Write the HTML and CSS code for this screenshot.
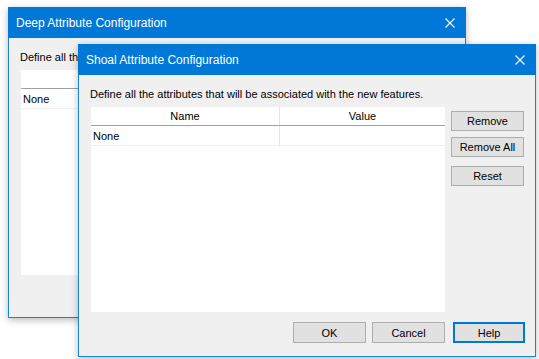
FILE: index.html
```html
<!DOCTYPE html>
<html>
<head>
    <link rel="stylesheet" href="styles.css">
</head>
<body>
    <div class="desktop">
        <!-- back window: only its left strip shows from under the front one -->
        <div class="window window-deep">
            <div class="titlebar">
                <span class="title">Deep Attribute Configuration</span>
                <svg class="close-icon" width="10" height="10" viewBox="0 0 10 10"><path d="M0.5 0.5L9.5 9.5M9.5 0.5L0.5 9.5" stroke="#fff" stroke-width="1.1" fill="none"/></svg>
            </div>
            <div class="window-body">
                <div class="description description-clipped">Define all the attributes that will be associated with the new features.</div>
                <div class="main-row">
                    <div class="list-view">
                        <div class="list-head">
                            <div class="cell"></div>
                            <div class="cell"></div>
                        </div>
                        <div class="list-row">
                            <div class="cell">None</div>
                            <div class="cell"></div>
                        </div>
                    </div>
                </div>
            </div>
        </div>

        <div class="window window-shoal">
            <div class="titlebar">
                <span class="title">Shoal Attribute Configuration</span>
                <svg class="close-icon" width="10" height="10" viewBox="0 0 10 10"><path d="M0.5 0.5L9.5 9.5M9.5 0.5L0.5 9.5" stroke="#fff" stroke-width="1.1" fill="none"/></svg>
            </div>
            <div class="window-body">
                <div class="description">Define all the attributes that will be associated with the new features.</div>
                <div class="main-row">
                    <div class="list-view">
                        <div class="list-head">
                            <div class="cell">Name</div>
                            <div class="cell">Value</div>
                        </div>
                        <div class="list-row">
                            <div class="cell">None</div>
                            <div class="cell"></div>
                        </div>
                    </div>
                    <div class="side-buttons">
                        <button class="btn">Remove</button>
                        <button class="btn">Remove All</button>
                        <button class="btn btn-reset">Reset</button>
                    </div>
                </div>
                <div class="footer">
                    <button class="btn">OK</button>
                    <button class="btn">Cancel</button>
                    <button class="btn btn-default">Help</button>
                </div>
            </div>
        </div>
    </div>
</body>
</html>
```

FILE: styles.css
```css
body {
    margin: 0;
    padding: 0;
    background: #ffffff;
    font-family: "Liberation Sans", Arial, sans-serif;
    font-size: 11px;
    color: #000;
}

.desktop {
    position: relative;
    width: 539px;
    height: 359px;
    overflow: hidden;
}

/* windows sit on a free desktop */
.window {
    position: absolute;
    width: 458px;
    box-sizing: border-box;
    background: #f0f0f0;
    border: 1px solid #1883d7;
    border-top: none;
    box-shadow: 0 2px 7px rgba(0, 0, 0, 0.28);
    display: flex;
    flex-direction: column;
}

.window-deep {
    left: 8px;
    top: 7px;
    height: 311px;
}

.window-shoal {
    left: 78px;
    top: 44px;
    height: 313px;
}

.titlebar {
    height: 31px;
    flex-shrink: 0;
    margin: 0 -1px;
    background: #0078d7;
    color: #fff;
    display: flex;
    align-items: center;
    justify-content: space-between;
    padding: 0 11px 0 8px;
}

.title {
    font-size: 12px;
}

.close-icon {
    display: block;
}

.window-body {
    flex: 1;
    display: flex;
    flex-direction: column;
    padding: 11px 10px 14px 12px;
}

.description {
    line-height: 16px;
    margin-left: -1px;
    margin-bottom: 5px;
    white-space: nowrap;
}

.description-clipped {
    width: 58px;
    overflow: hidden;
}

.main-row {
    flex: 1;
    display: flex;
    gap: 6px;
}

.list-view {
    width: 354px;
    height: 205px;
    background: #fff;
}

.list-head,
.list-row {
    display: grid;
    grid-template-columns: 189px 1fr;
}

.list-head {
    height: 19px;
    border-bottom: 1px solid #a0a0a0;
    box-sizing: border-box;
}

.list-row {
    height: 20px;
    border-bottom: 1px solid #f0f0f0;
    box-sizing: border-box;
}

.cell {
    display: flex;
    align-items: center;
    padding: 0 2px;
    border-right: 1px solid #e5e5e5;
}

.list-head .cell {
    justify-content: center;
}

.cell:last-child {
    border-right: none;
}

.side-buttons {
    display: flex;
    flex-direction: column;
    gap: 6px;
    padding-top: 4px;
}

.btn {
    width: 73px;
    height: 20px;
    box-sizing: border-box;
    background: #e1e1e1;
    border: 1px solid #adadad;
    font-family: inherit;
    font-size: 11px;
    color: #000;
    padding: 0;
}

.btn-reset {
    margin-top: 3px;
}

.footer {
    display: flex;
    justify-content: flex-end;
    gap: 6px;
    margin-top: 10px;
}

.footer .btn {
    height: 21px;
}

.btn-default {
    border: 2px solid #0078d7;
    margin-left: 2px;
    width: 72px;
}
```
